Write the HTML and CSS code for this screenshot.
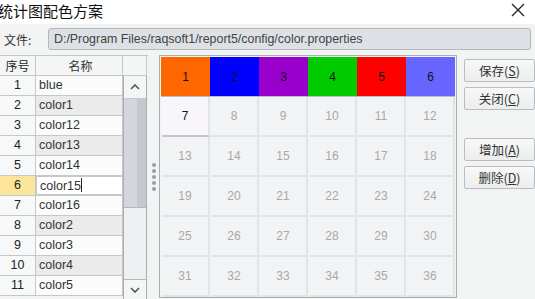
FILE: index.html
```html
<!DOCTYPE html>
<html>
<head>
  <title>统计图配色方案</title>
  <link rel="stylesheet" href="styles.css">
</head>
<body>
  <div class="titlebar">
    <span class="title">统计图配色方案</span>
    <span class="close">
      <svg width="14" height="14" viewBox="0 0 14 14"><path d="M1 1L13 13M13 1L1 13" stroke="#222" stroke-width="1.3"/></svg>
    </span>
  </div>

  <div class="filerow">
    <label>文件:</label>
    <div class="field">D:/Program Files/raqsoft1/report5/config/color.properties</div>
  </div>

  <div class="main">
    <div class="table">
      <div class="cells">
        <div class="row head"><div class="no">序号</div><div class="name center">名称</div></div>
        <div class="row"><div class="no">1</div><div class="name">blue</div></div>
        <div class="row alt"><div class="no">2</div><div class="name">color1</div></div>
        <div class="row"><div class="no">3</div><div class="name">color12</div></div>
        <div class="row alt"><div class="no">4</div><div class="name">color13</div></div>
        <div class="row"><div class="no">5</div><div class="name">color14</div></div>
        <div class="row current"><div class="no">6</div><div class="name edit">color15<span class="caret"></span></div></div>
        <div class="row"><div class="no">7</div><div class="name">color16</div></div>
        <div class="row alt"><div class="no">8</div><div class="name">color2</div></div>
        <div class="row"><div class="no">9</div><div class="name">color3</div></div>
        <div class="row alt"><div class="no">10</div><div class="name">color4</div></div>
        <div class="row"><div class="no">11</div><div class="name">color5</div></div>
      </div>
      <div class="scrollcol">
        <div class="corner"></div>
        <div class="scrollbar">
          <div class="arrow">
            <svg width="10" height="6" viewBox="0 0 10 6"><path d="M1 5L5 1L9 5" fill="none" stroke="#555" stroke-width="1.6"/></svg>
          </div>
          <div class="thumb"></div>
          <div class="track"></div>
          <div class="arrow">
            <svg width="10" height="6" viewBox="0 0 10 6"><path d="M1 1L5 5L9 1" fill="none" stroke="#555" stroke-width="1.6"/></svg>
          </div>
        </div>
      </div>
    </div>

    <div class="splitter">
      <span></span><span></span><span></span><span></span><span></span>
    </div>

    <div class="board">
      <div class="swatch" style="background:#ff6600">1</div>
      <div class="swatch" style="background:#0000ff">2</div>
      <div class="swatch" style="background:#9900cc">3</div>
      <div class="swatch" style="background:#00cc00">4</div>
      <div class="swatch" style="background:#ff0000">5</div>
      <div class="swatch" style="background:#6666ff">6</div>
      <div class="slot selected">7</div>
      <div class="slot">8</div>
      <div class="slot">9</div>
      <div class="slot">10</div>
      <div class="slot">11</div>
      <div class="slot">12</div>
      <div class="slot">13</div>
      <div class="slot">14</div>
      <div class="slot">15</div>
      <div class="slot">16</div>
      <div class="slot">17</div>
      <div class="slot">18</div>
      <div class="slot">19</div>
      <div class="slot">20</div>
      <div class="slot">21</div>
      <div class="slot">22</div>
      <div class="slot">23</div>
      <div class="slot">24</div>
      <div class="slot">25</div>
      <div class="slot">26</div>
      <div class="slot">27</div>
      <div class="slot">28</div>
      <div class="slot">29</div>
      <div class="slot">30</div>
      <div class="slot">31</div>
      <div class="slot">32</div>
      <div class="slot">33</div>
      <div class="slot">34</div>
      <div class="slot">35</div>
      <div class="slot">36</div>
    </div>

    <div class="buttons">
      <button>保存(<u>S</u>)</button>
      <button>关闭(<u>C</u>)</button>
      <button class="gap">增加(<u>A</u>)</button>
      <button>删除(<u>D</u>)</button>
    </div>
  </div>
</body>
</html>
```

FILE: styles.css
```css
body {
  margin: 0;
  height: 299px;
  overflow: hidden;
  background-color: #f2f3f3;
  font-family: "Liberation Sans", "Noto Sans CJK SC", sans-serif;
  font-size: 12.5px;
  color: #222;
}

.titlebar {
  height: 24px;
  background: white;
  display: flex;
  justify-content: space-between;
  align-items: center;
}

.title {
  font-family: "Noto Sans CJK SC", sans-serif;
  font-size: 15px;
  margin-left: -2px;
  margin-top: -4px;
  color: #111;
}

.close {
  display: flex;
  margin-right: 10px;
  margin-top: -4px;
}

.filerow {
  display: flex;
  align-items: center;
  padding: 4px 4px 5px 4px;
}

.filerow label {
  width: 44px;
  font-family: "Noto Sans CJK SC", sans-serif;
  font-size: 12px;
  color: #333;
}

.field {
  flex: 1;
  height: 20px;
  line-height: 20px;
  padding-left: 5px;
  background: #dde0e5;
  border: 1px solid #b4b8bd;
  border-radius: 3px;
  color: #444;
  font-size: 12.4px;
}

.main {
  display: flex;
  align-items: flex-start;
}

/* list of colour schemes */
.table {
  display: flex;
  width: 148px;
  height: 244px;
  overflow: hidden;
  border-top: 1px solid #c4c8cc;
}

.cells {
  width: 123px;
}

.row {
  display: flex;
  height: 20px;
  border-bottom: 1px solid #c4c8cc;
  box-sizing: border-box;
}

.row > div {
  line-height: 19px;
  border-right: 1px solid #c4c8cc;
  box-sizing: border-box;
}

.no {
  width: 36px;
  text-align: center;
  background: #f7f8f8;
}

.name {
  flex: 1;
  padding-left: 3px;
  background: #fbfbfb;
  color: #333;
}

.row.alt .name {
  background: #ebebeb;
}

.head .no, .head .name {
  background: #f4f5f5;
  font-family: "Noto Sans CJK SC", sans-serif;
  font-size: 12px;
}

.center {
  text-align: center;
}

.row.current .no {
  background: #fde49b;
}

.edit {
  background: white !important;
  border: 1px solid #c4c8cc;
}

.caret {
  display: inline-block;
  width: 1px;
  height: 14px;
  background: #222;
  vertical-align: -2px;
}

.scrollcol {
  width: 24px;
  display: flex;
  flex-direction: column;
}

.corner {
  height: 19px;
  border-bottom: 1px solid #c4c8cc;
  border-right: 1px solid #c4c8cc;
  background: #f4f5f5;
}

.scrollbar {
  flex: 1;
  display: flex;
  flex-direction: column;
  border-left: 1px solid #a8aeb4;
  border-right: 1px solid #a8aeb4;
  background: #eff0f1;
}

.arrow {
  height: 22px;
  display: flex;
  align-items: center;
  justify-content: center;
  background: #f4f5f5;
  border-bottom: 1px solid #c4c8cc;
}

.arrow:last-child {
  height: 20px;
  border-top: 1px solid #b4b8bd;
  border-bottom: none;
}

.thumb {
  height: 108px;
  background: linear-gradient(to right, #d3d7dd 0, #d3d7dd 60%, #c4c9d0 60%);
  border-bottom: 1px solid #b4b8bd;
}

.track {
  flex: 1;
}

.splitter {
  width: 11px;
  height: 244px;
  display: flex;
  flex-direction: column;
  align-items: center;
  justify-content: center;
  gap: 2px;
}

.splitter span {
  width: 4px;
  height: 4px;
  border-radius: 50%;
  background: #9a9ea2;
}

/* colour board */
.board {
  display: grid;
  grid-template-columns: repeat(6, 49px);
  grid-template-rows: repeat(6, 40px);
  border: 1px solid #a8aeb4;
  padding: 1px 1px 0 1px;
  background: #f2f3f3;
}

.swatch {
  display: flex;
  align-items: center;
  justify-content: center;
  font-size: 12px;
  color: #111;
  border-bottom: 1px solid #b8bec4;
}

.slot {
  display: flex;
  align-items: center;
  justify-content: center;
  background: #f2f3f4;
  color: #a8a8a8;
  font-size: 12px;
  border-right: 2px solid #e1e4e6;
  border-bottom: 2px solid #e1e4e6;
  margin: 0 0 0 1px;
}

.slot.selected {
  background: #f8f6fb;
  color: #111;
  border-bottom: 2px solid #c0c6cc;
}

.buttons {
  display: flex;
  flex-direction: column;
  margin-left: 7px;
  padding-top: 4px;
}

.buttons button {
  width: 71px;
  height: 23px;
  margin-bottom: 5px;
  padding: 0;
  font-family: "Noto Sans CJK SC", sans-serif;
  font-size: 12.5px;
  color: #333;
  background: linear-gradient(#f8f8f8, #eceded);
  border: 1px solid #b9bdc1;
  border-radius: 2px;
}

.buttons button.gap {
  margin-top: 23px;
}
```
